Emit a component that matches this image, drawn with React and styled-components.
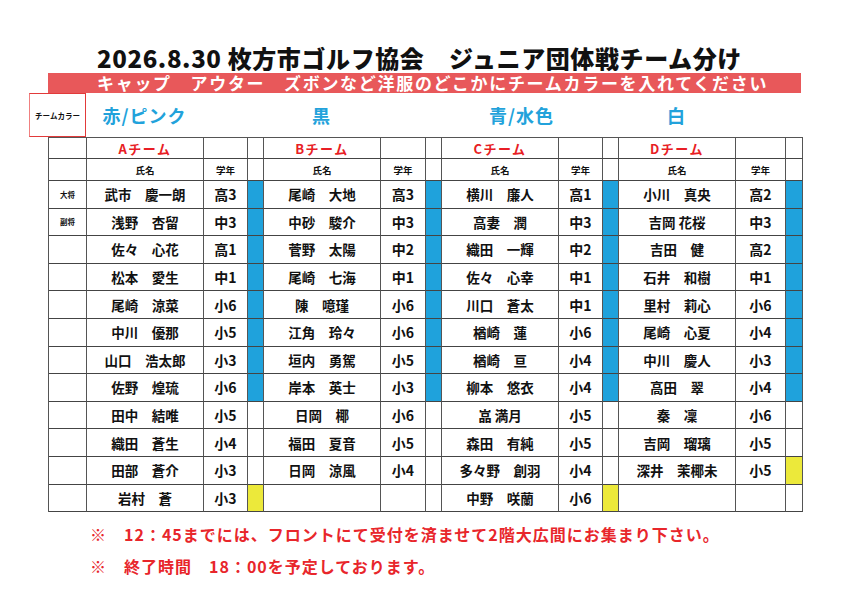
import React from "react";
import styled, { createGlobalStyle } from "styled-components";

const GlobalStyle = createGlobalStyle`
  html, body {
    margin: 0;
    padding: 0;
    background: #ffffff;
  }
  body {
    font-family: "Noto Sans CJK JP", "Noto Sans", sans-serif;
    color: #111;
  }
`;

const COLS = "38px 117px 44px 16px 117px 45px 16px 117px 44px 16px 117px 50px 17px";

const teams = [
  {
    label: "Aチーム",
    color: "赤/ピンク",
    col: 2,
    players: [
      ["武市　慶一朗", "高3"], ["浅野　杏留", "中3"], ["佐々　心花", "高1"],
      ["松本　愛生", "中1"], ["尾崎　涼菜", "小6"], ["中川　優那", "小5"],
      ["山口　浩太郎", "小3"], ["佐野　煌琉", "小6"], ["田中　結唯", "小5"],
      ["織田　蒼生", "小4"], ["田部　蒼介", "小3"], ["岩村　蒼", "小3"],
    ],
    marks: ["b", "b", "b", "b", "b", "b", "b", "b", "", "", "", "y"],
  },
  {
    label: "Bチーム",
    color: "黒",
    col: 4,
    players: [
      ["尾崎　大地", "高3"], ["中砂　駿介", "中3"], ["菅野　太陽", "中2"],
      ["尾崎　七海", "中1"], ["陳　噫瑾", "小6"], ["江角　玲々", "小6"],
      ["垣内　勇駕", "小5"], ["岸本　英士", "小3"], ["日岡　椰", "小6"],
      ["福田　夏音", "小5"], ["日岡　涼風", "小4"], ["", ""],
    ],
    marks: ["b", "b", "b", "b", "b", "b", "b", "b", "", "", "", ""],
  },
  {
    label: "Cチーム",
    color: "青/水色",
    col: 6,
    players: [
      ["横川　廉人", "高1"], ["高妻　潤", "中3"], ["織田　一輝", "中2"],
      ["佐々　心幸", "中1"], ["川口　蒼太", "中1"], ["楢崎　蓮", "小6"],
      ["楢崎　亘", "小4"], ["柳本　悠衣", "小4"], ["嵓 満月", "小5"],
      ["森田　有純", "小5"], ["多々野　創羽", "小4"], ["中野　咲蘭", "小6"],
    ],
    marks: ["b", "b", "b", "b", "b", "b", "b", "b", "", "", "", "y"],
  },
  {
    label: "Dチーム",
    color: "白",
    col: 8,
    players: [
      ["小川　真央", "高2"], ["吉岡 花桜", "中3"], ["吉田　健", "高2"],
      ["石井　和樹", "中1"], ["里村　莉心", "小6"], ["尾崎　心夏", "小4"],
      ["中川　慶人", "小3"], ["高田　翠", "小4"], ["秦　凜", "小6"],
      ["吉岡　瑠璃", "小5"], ["深井　茉椰未", "小5"], ["", ""],
    ],
    marks: ["b", "b", "b", "b", "b", "b", "b", "b", "", "", "y", ""],
  },
];

const roles = ["大将", "副将"];

export default function App() {
  return (
    <Page>
      <GlobalStyle />
      <Title>2026.8.30 枚方市ゴルフ協会　ジュニア団体戦チーム分け</Title>
      <Banner>キャップ　アウター　ズボンなど洋服のどこかにチームカラーを入れてください</Banner>
      <ColorRow>
        <ColorBox>チームカラー</ColorBox>
        {teams.map((t) => (
          <ColorName key={t.label} $col={t.col}>{t.color}</ColorName>
        ))}
      </ColorRow>
      <Table>
        <Cell />
        {teams.map((t) => (
          <React.Fragment key={t.label}>
            <Cell><TeamName>{t.label}</TeamName></Cell>
            <Cell />
            <Cell />
          </React.Fragment>
        ))}
        <Cell $h={22} />
        {teams.map((t) => (
          <React.Fragment key={t.label}>
            <Cell $h={22}><HeadText>氏名</HeadText></Cell>
            <Cell $h={22}><HeadText>学年</HeadText></Cell>
            <Cell $h={22} />
          </React.Fragment>
        ))}
        {Array.from({ length: 12 }).map((_, r) => (
          <React.Fragment key={r}>
            <Cell $h={27.6}><Role>{roles[r] || ""}</Role></Cell>
            {teams.map((t) => (
              <React.Fragment key={t.label}>
                <Cell $h={27.6}><Name>{t.players[r][0]}</Name></Cell>
                <Cell $h={27.6}><Grade>{t.players[r][1]}</Grade></Cell>
                <Cell $h={27.6} $mark={t.marks[r]} />
              </React.Fragment>
            ))}
          </React.Fragment>
        ))}
      </Table>
      <Notes>
        <Note>※　<span>12：45までには、フロントにて受付を済ませて2階大広間にお集まり下さい。</span></Note>
        <Note>※　<span>終了時間　18：00を予定しております。</span></Note>
      </Notes>
    </Page>
  );
}

const Page = styled.div`
  width: 842px;
  height: 595px;
  overflow: hidden;
  background: #fff;
  padding-top: 42px;
  box-sizing: border-box;
`;

const Title = styled.div`
  padding-left: 97px;
  height: 31px;
  font-size: 24px;
  font-weight: 900;
  line-height: 31px;
  letter-spacing: 0.6px;
  color: #111;
  white-space: nowrap;
`;

const Banner = styled.div`
  margin-left: 48px;
  width: 753px;
  height: 20px;
  background: #e8585a;
  color: #fff;
  font-size: 17px;
  font-weight: 700;
  line-height: 20px;
  padding-left: 49px;
  box-sizing: border-box;
  letter-spacing: 1.7px;
  white-space: nowrap;
`;

const ColorRow = styled.div`
  display: grid;
  grid-template-columns: 57px 117px 60px 117px 61px 161px 16px 117px 67px;
  margin-left: 29px;
  height: 44px;
  align-items: center;
`;

const ColorBox = styled.div`
  grid-column: 1;
  height: 44px;
  box-sizing: border-box;
  border: 1px solid #e23a3a;
  border-left-color: #f08080;
  display: flex;
  align-items: center;
  justify-content: center;
  font-size: 7.5px;
  font-weight: 700;
  color: #111;
  white-space: nowrap;
`;

const ColorName = styled.div`
  grid-column: ${(p) => p.$col};
  grid-row: 1;
  text-align: center;
  font-size: 18px;
  font-weight: 700;
  color: #22a2db;
  letter-spacing: 1px;
  white-space: nowrap;
`;

const Table = styled.div`
  display: grid;
  grid-template-columns: ${COLS};
  margin-left: 48px;
  width: max-content;
  border-top: 1px solid #555;
  border-left: 1px solid #555;
`;

const Cell = styled.div`
  height: ${(p) => p.$h || 21}px;
  box-sizing: border-box;
  border-right: 1px solid #555;
  border-bottom: 1px solid #444;
  display: flex;
  align-items: center;
  justify-content: center;
  background: ${(p) =>
    p.$mark === "b" ? "#1fa2dc" : p.$mark === "y" ? "#ece93a" : "transparent"};
  overflow: hidden;
`;

const TeamName = styled.span`
  font-size: 13px;
  font-weight: 700;
  color: #e81e25;
  letter-spacing: 1.5px;
`;

const HeadText = styled.span`
  font-size: 9.5px;
  font-weight: 700;
  color: #111;
`;

const Role = styled.span`
  font-size: 7.5px;
  font-weight: 700;
  color: #111;
`;

const Name = styled.span`
  font-size: 13.5px;
  font-weight: 700;
  color: #111;
  white-space: pre;
`;

const Grade = styled.span`
  font-size: 14px;
  font-weight: 700;
  color: #111;
`;

const Notes = styled.div`
  padding-left: 90px;
  padding-top: 11px;
  display: flex;
  flex-direction: column;
  gap: 10px;
`;

const Note = styled.div`
  font-size: 16px;
  font-weight: 700;
  color: #e8262b;
  line-height: 22px;
  white-space: nowrap;
  letter-spacing: 1px;
`;
